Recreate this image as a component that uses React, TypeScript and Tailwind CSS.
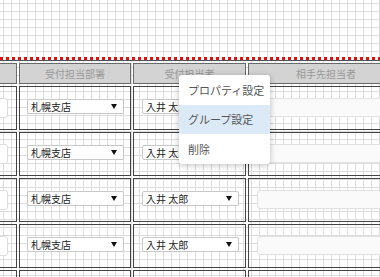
import React from "react";

const rows = [
  { dept: "札幌支店", person: "入井 太郎" },
  { dept: "札幌支店", person: "入井 太郎" },
  { dept: "札幌支店", person: "入井 太郎" },
  { dept: "札幌支店", person: "入井 太郎" },
];

const font = "font-['Noto_Sans_CJK_JP','Noto_Sans',sans-serif]";

function SelectBox({ value }: { value: string }) {
  return (
    <div className="flex h-[15px] w-[97px] items-center justify-between rounded-[2px] border border-[#c8c8c8] bg-white pl-[3px] pr-[6px] text-[10px] leading-none text-[#222]">
      <span>{value}</span>
      <svg width="6" height="5" viewBox="0 0 6 5">
        <path d="M0 0h6L3 5z" fill="#111" />
      </svg>
    </div>
  );
}

export default function App() {
  return (
    <div
      className={`relative h-[277px] w-[380px] overflow-hidden bg-white ${font} bg-[linear-gradient(to_right,#dcdcdc_1px,transparent_1px),linear-gradient(to_bottom,#dcdcdc_1px,transparent_1px)] bg-[size:8px_8px] bg-[position:3px_3px]`}
    >
      <div className="pt-[57px]">
        {/* 区切り線 */}
        <div className="h-[3px] w-full bg-[repeating-linear-gradient(90deg,#e41010_0_3px,#ffffff_3px_6px)]" />
        <div className="h-px w-full bg-[#555]" />

        {/* ヘッダー */}
        <div className="ml-[-96px] mt-[2px] flex gap-[2px]">
          <div className="h-[21px] w-[113px] shrink-0 border border-[#6a6a6a] bg-[#d3d3d3]" />
          <div className="flex h-[21px] w-[112px] shrink-0 items-center justify-center border border-[#6a6a6a] bg-[#d3d3d3] text-[10px] text-[#999]">
            受付担当部署
          </div>
          <div className="flex h-[21px] w-[113px] shrink-0 items-center justify-center border border-[#6a6a6a] bg-[#d3d3d3] text-[10px] text-[#999]">
            受付担当者
          </div>
          <div className="flex h-[21px] w-[156px] shrink-0 items-center justify-center border border-[#6a6a6a] bg-[#d3d3d3] text-[10px] text-[#999]">
            相手先担当者
          </div>
        </div>

        {/* 明細行 */}
        <div className="mt-[2px] flex flex-col gap-[2px]">
          {[...rows, null].map((r, idx) => (
            <div key={idx} className="ml-[-96px] flex gap-[2px]">
              <div className="h-[44px] w-[113px] shrink-0 border border-[#444] pt-[11px]">
                {r && <div className="ml-auto mr-[8px] h-[20px] w-[60px] rounded-[3px] border border-[#ddd] bg-white" />}
              </div>
              <div className="h-[44px] w-[112px] shrink-0 border border-[#444] pl-[7px] pt-[12px]">
                {r && <SelectBox value={r.dept} />}
              </div>
              <div className="h-[44px] w-[113px] shrink-0 border border-[#444] pl-[8px] pt-[12px]">
                {r && <SelectBox value={r.person} />}
              </div>
              <div className="h-[44px] w-[156px] shrink-0 border border-[#444] pl-[8px] pt-[11px]">
                {r && <div className="h-[19px] w-[150px] rounded-[3px] border border-[#e2e2e2] bg-[#fafafa]" />}
              </div>
            </div>
          ))}
        </div>
      </div>

      {/* コンテキストメニュー */}
      <div className="absolute left-[179px] top-[75px] w-[91px] overflow-hidden rounded-[3px] bg-white text-[11px] text-[#555] shadow-[0_1px_6px_rgba(0,0,0,0.25)]">
        <div className="flex h-[30px] items-center pl-[9px]">プロパティ設定</div>
        <div className="flex h-[29px] items-center bg-[#dceaf8] pl-[9px]">グループ設定</div>
        <div className="flex h-[30px] items-center pl-[9px]">削除</div>
      </div>
    </div>
  );
}
